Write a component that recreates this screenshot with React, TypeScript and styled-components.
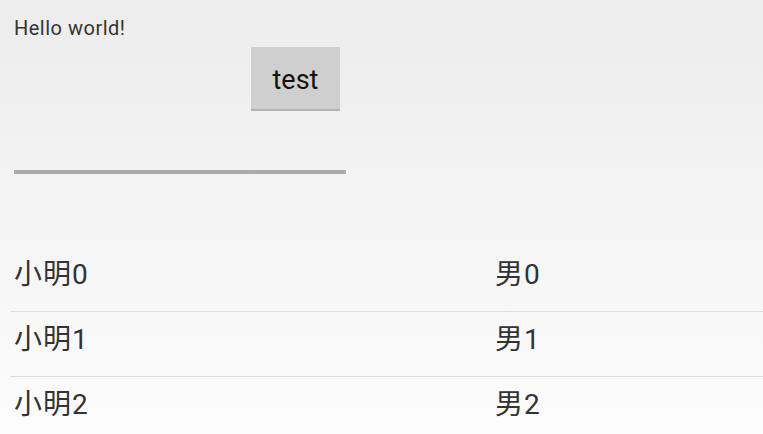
import styled, { createGlobalStyle } from "styled-components"

const GlobalStyle = createGlobalStyle`
  html, body {
    margin: 0;
    padding: 0;
  }
  body {
    width: 763px;
    height: 434px;
    overflow: hidden;
    font-family: Roboto, "Noto Sans CJK SC", sans-serif;
    background: linear-gradient(#ececec, #fcfcfc);
  }
`

const people = [
    { name: "小明0", sex: "男0" },
    { name: "小明1", sex: "男1" },
    { name: "小明2", sex: "男2" },
]

export default function App() {
    return (<>
        <GlobalStyle />
        <Page>
            <Hello>Hello world!</Hello>
            <ButtonRow>
                <Button>test</Button>
            </ButtonRow>
            <Input />
            <List>
                {people.map((p) => (
                    <Row key={p.name}>
                        <Cell>{p.name}</Cell>
                        <Cell>{p.sex}</Cell>
                    </Row>
                ))}
            </List>
        </Page>
    </>)
}

const Page = styled.div`
    display: flex;
    flex-direction: column;
`

const Hello = styled.div`
    margin: 16px 0 0 14px;
    font-size: 20px;
    letter-spacing: 0.5px;
    line-height: 24px;
    color: #333;
`

const ButtonRow = styled.div`
    display: flex;
    padding-left: 251px;
    margin-top: 7px;
`

const Button = styled.button`
    width: 89px;
    height: 62px;
    border: none;
    border-radius: 1px;
    background: #cfcfcf;
    box-shadow: 0 2px 0 #b3b3b3;
    font-family: Roboto, sans-serif;
    font-size: 27px;
    color: #111;
    padding: 4px 0 0;
`

const Input = styled.div`
    flex-shrink: 0;
    margin: 61px 0 0 14px;
    width: 332px;
    height: 4px;
    background: #acacac;
`

const List = styled.div`
    display: flex;
    flex-direction: column;
    margin-top: 73px;
    padding-left: 10px;
`

const Row = styled.div`
    display: grid;
    grid-template-columns: 481px 1fr;
    flex-shrink: 0;
    height: 65px;
    border-bottom: 1px solid #dcdcdc;
    font-size: 28px;
    letter-spacing: 1px;
    color: #333;
    padding: 10px 0 0 4px;
    box-sizing: border-box;
`

const Cell = styled.div`
    line-height: 36px;
`
